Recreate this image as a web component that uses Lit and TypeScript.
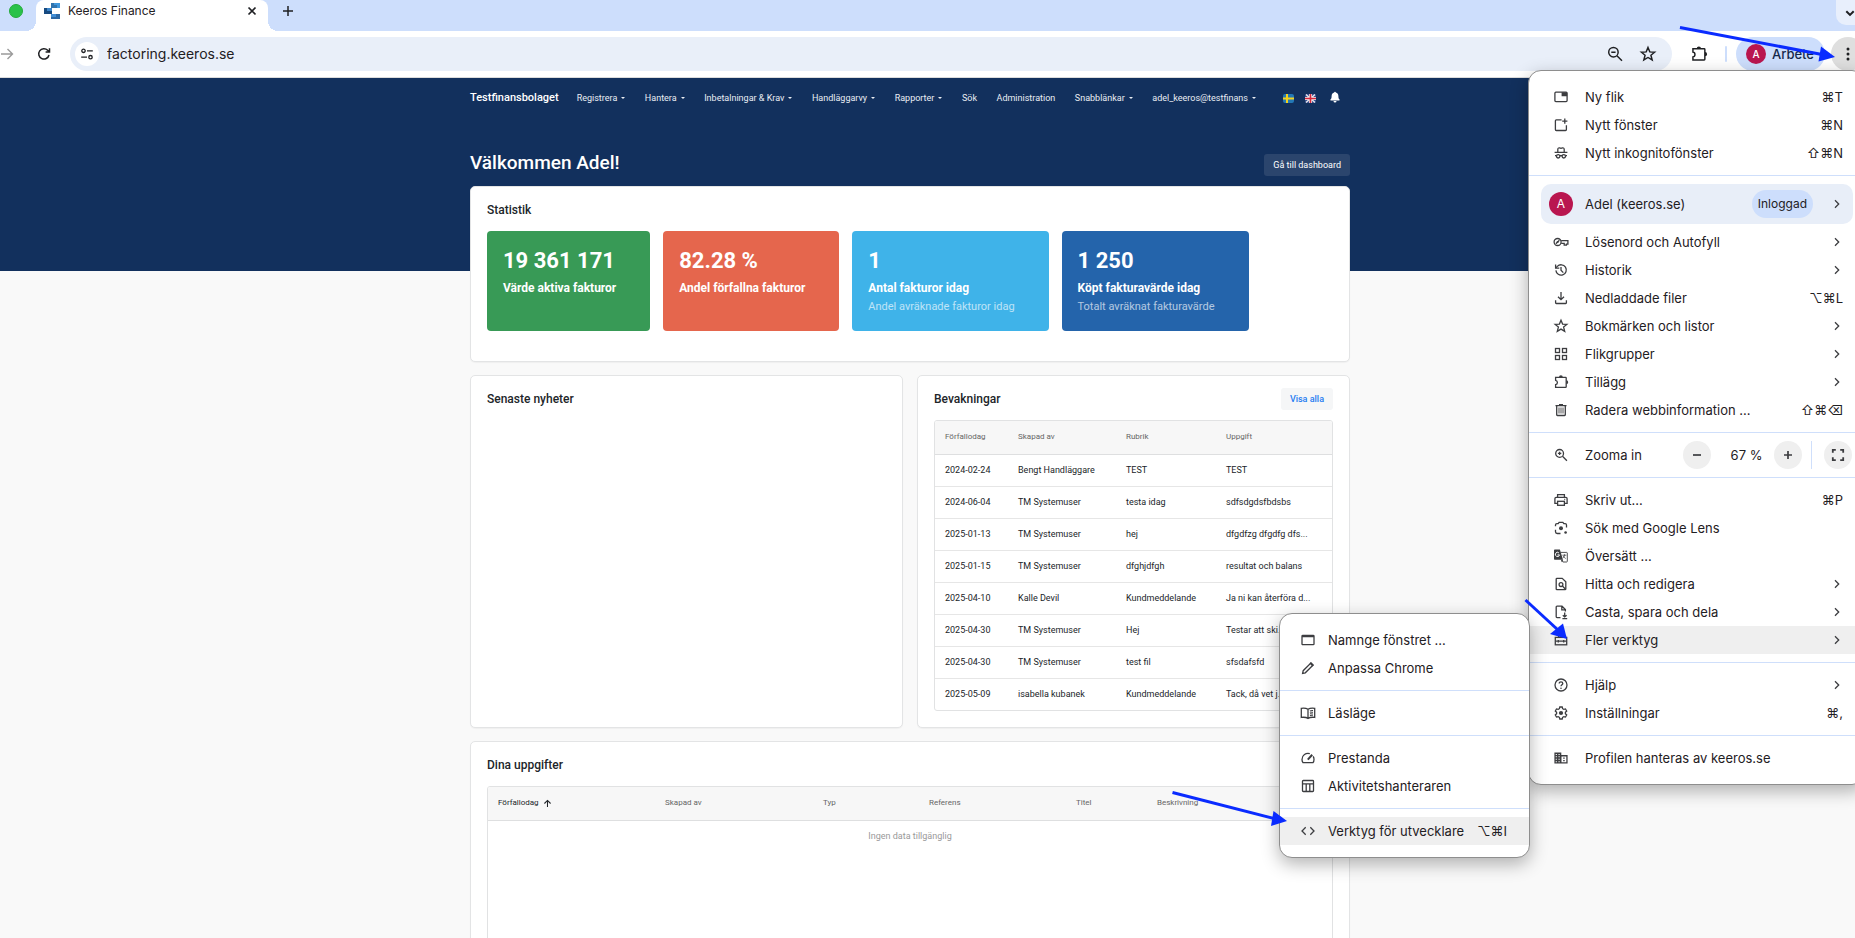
import { LitElement, html, svg, css, nothing, TemplateResult, SVGTemplateResult } from "lit";
import { customElement } from "lit/decorators.js";
import { classMap } from "lit/directives/class-map.js";

/* Stroke icons on a 16 x 16 grid; parts marked "f" are filled instead. */
const ICONS: Record<string, SVGTemplateResult> = {
  newTab: svg`<rect x="1.9" y="3.2" width="12.2" height="9.4" rx="1"/><path class="f" d="M8.6 3.2h5.5v4H8.6z"/>`,
  newWindow: svg`<path d="M8.6 2.9H3.3a.9.9 0 0 0-.9.9v8.8c0 .5.4.9.9.9h9.2c.5 0 .9-.4.9-.9V8.2"/><path d="M11.8 1.6v5.2M9.2 4.2h5.2"/>`,
  incognito: svg`<path d="M4.8 7.2V4.4c0-1.1.8-1.8 1.7-1.5l1.5.5 1.5-.5c.9-.3 1.7.4 1.7 1.5v2.8M1.600 7.400h12.800"/><circle cx="5.2" cy="11.3" r="1.7"/><circle cx="10.8" cy="11.3" r="1.7"/><path d="M6.9 11c.6-.5 1.6-.5 2.2 0M2 10.6h1.5M14 10.6h-1.5"/>`,
  key: svg`<circle cx="4.6" cy="8" r="3.5"/><circle class="f" cx="4.600" cy="8" r="1"/><path d="M2.800 9.800 6.400 6.200M8.200 6.600h6.700v3.600h-1.500v.9h-2.200V9.300H8.200"/>`,
  history: svg`<path d="M2.9 8.4A5.2 5.2 0 1 0 4.3 4.4L2.9 5.8"/><path d="M2.6 2.4v3.7h3.7M8 5.1v3.2l2.3 2.3"/>`,
  download: svg`<path d="M8 2v7.6M5 6.7l3 3 3-3M2.6 10.3v2.5c0 .4.3.7.7.7h9.4c.4 0 .7-.3.7-.7v-2.5"/>`,
  star: svg`<path d="m8 2.200 1.600 3.900 4.300.3-3.300 2.700 1.100 4.200L8 11.100l-3.700 2.200 1.100-4.200-3.300-2.700 4.300-.3z"/>`,
  grid: svg`<rect x="2.500" y="2.500" width="4" height="4"/><rect x="9.500" y="2.500" width="4" height="4"/><rect x="2.500" y="9.500" width="4" height="4"/><rect x="9.500" y="9.500" width="4" height="4"/>`,
  puzzle: svg`<path d="M2.600 3.300H12.600c.4 0 .6.2.6.6v8.800c0 .4-.2.6-.6.6H2.600v-2.700c1.100-.1 1.800-.9 1.800-2.100S3.700 6.500 2.600 6.300z"/><path class="f" d="M6 3.200a1.900 1.900 0 0 1 3.800 0zM13.300 6.300a1.900 1.900 0 0 1 0 3.800z"/>`,
  trash: svg`<path d="M3.700 3.900v8.900c0 .4.3.7.7.7h7.200c.4 0 .7-.3.7-.7V3.900M2.500 3.600h11M6 2.600h4"/><path d="M6 5.500v6M8 5.500v6M10 5.500v6" stroke-width=".9"/>`,
  zoomIn: svg`<circle cx="6.600" cy="6.400" r="3.900"/><path d="m9.500 9.300 4.400 4.400M6.600 4.700v3.400M4.900 6.400h3.400"/>`,
  zoomOut: svg`<circle cx="6.600" cy="6.400" r="4.200"/><path d="m9.700 9.500 4.500 4.500M4.700 6.400h3.800"/>`,
  printer: svg`<path d="M4.600 5.300V2.700h6.800v2.600M4.400 11.300H1.900V6.700c0-.8.5-1.300 1.300-1.300h9.600c.8 0 1.300.5 1.300 1.300v4.600h-2.500"/><rect x="4.600" y="9.300" width="6.800" height="4"/><path d="M11.300 7.300h.9"/>`,
  lens: svg`<path d="M2.500 6.300V5c0-.8.600-1.400 1.400-1.400h1.300l.9-1.200h3.800l.9 1.200h1.300c.8 0 1.400.6 1.400 1.400v2.500M2.500 9.700v2c0 1 .8 1.800 1.800 1.800h3.200"/><circle class="f" cx="8" cy="8.200" r="2"/><circle class="f" cx="12.600" cy="12.500" r="1.300"/>`,
  translate: svg`<path d="M7.500 4.400h6.200c.3 0 .6.300.6.600v8.400c0 .3-.3.600-.6.600H9.900l-.9-2" stroke-width=".9"/><path class="f" d="M2 1.600h4.900L10 11.700H2c-.6 0-1-.4-1-1V2.600c0-.6.4-1 1-1z"/><path class="wl" d="M5.900 4.900A2.100 2.100 0 1 0 6.500 6.900H4.500"/><path class="f" d="m8.700 14.200 1.500-2.500H8z"/><path d="M9.400 7.200h3.900M11.500 6.300v.9c0 1.100-.7 2.100-1.500 2.700M10.300 8.200c.4.900 1.300 1.700 2.400 2.300" stroke-width=".8"/>`,
  findPage: svg`<path d="M9.200 2.300H4c-.5 0-.8.3-.8.800v9.800c0 .5.3.8.800.8h8c.5 0 .8-.3.800-.8V5.800z"/><circle cx="8" cy="8.600" r="1.900"/><path d="m9.400 10 2.900 3"/>`,
  savePage: svg`<path d="M7.500 13.600H4c-.5 0-.8-.3-.8-.8V3c0-.5.3-.8.800-.8h5l3.400 3.400v1.800M8.800 2.400v3.400h3.400M11.700 8.600v4M9.800 11.200l1.900 1.700 1.900-1.700M9.400 14.600h4.800"/>`,
  toolbox: svg`<path d="M5.600 5.400V3.700h4.800v1.700"/><rect x="2.300" y="5.400" width="11.400" height="7.400"/><path d="M2.300 9.200h11.400M5.300 8v2.400M10.700 8v2.400"/>`,
  help: svg`<circle cx="8" cy="8" r="6"/><path d="M6.200 6.500c0-1 .8-1.700 1.800-1.700s1.800.7 1.800 1.600c0 1.200-1.800 1.400-1.800 2.900"/><circle class="f" cx="8" cy="11.200" r=".8"/>`,
  gear: svg`<path d="M6.800 2h2.400l.4 1.700 1.200.7 1.700-.5 1.200 2.100-1.300 1.200v1.600l1.300 1.200-1.200 2.100-1.700-.5-1.200.7-.4 1.700H6.800l-.4-1.700-1.200-.7-1.700.5L2.300 10l1.300-1.200V7.200L2.300 6l1.200-2.100 1.700.5 1.200-.7z"/><circle class="f" cx="8" cy="8" r="2.100"/>`,
  building: svg`<path class="f" d="M1.400 2.400h6.900v2.700h6.300v8.500H1.400z"/><path class="w" d="M2.700 3.900h1.200v1H2.700zM5.500 3.900h1.200v1H5.500zM2.700 6.300h1.200v1H2.700zM5.500 6.300h1.200v1H5.500zM2.700 8.800h1.200v1H2.700zM5.500 8.800h1.200v1H5.500zM2.700 11.200h1.200v1H2.700zM5.500 11.200h1.200v1H5.500zM8.500 6.400h4.800v5.900H8.500z"/><path class="f" d="M10.200 7.500h1.500v1.200h-1.500zM10.200 10h1.500v1.200h-1.500z"/>`,
  window: svg`<rect x="2" y="3.300" width="12" height="9.400" rx=".8"/><path class="f" d="M2 3h12v2.300H2z"/>`,
  pencil: svg`<path d="m2.600 13.400.6-2.700 7.600-7.600 2.100 2.100-7.600 7.600z"/><path class="f" d="m9.500 3.500 1.500-1.500 3 3-1.500 1.500z"/>`,
  reader: svg`<path d="M8 4.300C6.500 3.300 3.700 3 1.300 3.300v9.100c2.400-.3 5.200 0 6.700 1 1.500-1 4.300-1.300 6.700-1V3.300C12.300 3 9.500 3.300 8 4.300zM8 4.300v9M9.900 6c1-.3 2-.4 3.100-.3M9.900 8.200c1-.3 2-.4 3.100-.3M9.900 10.400c1-.3 2-.4 3.100-.3"/>`,
  gauge: svg`<path d="M9.800 3.700A6 6 0 0 0 2 9.400c0 1.200.4 2.400 1 3.300h10c.7-.9 1-2.100 1-3.300 0-1.100-.3-2.100-.8-3"/><path d="m7.800 9.600 4.400-4.800" stroke-width="2"/>`,
  panel: svg`<rect x="2.500" y="2.500" width="11" height="11" rx=".8"/><path d="M2.500 5.900h11M6.200 5.900v7.600M9.800 5.900v7.600"/>`,
  code: svg`<path d="M5.700 4.200 2 8l3.700 3.800M10.300 4.200 14 8l-3.700 3.800"/>`,
  chevron: svg`<path d="m6 4.300 3.700 3.700L6 11.700"/>`,
  chevronDown: svg`<path d="m4.300 6.200 3.700 3.700 3.700-3.700" stroke-width="2"/>`,
  minus: svg`<path d="M4 8h8" stroke-width="1.700"/>`,
  plus: svg`<path d="M4 8h8M8 4v8" stroke-width="1.700"/>`,
  newTabPlus: svg`<path d="M3 8h10M8 3v10" stroke-width="1.500"/>`,
  close: svg`<path d="m4.500 4.500 7 7m0-7-7 7" stroke-width="1.700"/>`,
  fullscreen: svg`<path d="M2.800 5.800V2.800h3M10.200 2.800h3v3M13.200 10.200v3h-3M5.800 13.200h-3v-3" stroke-width="1.800"/>`,
  forward: svg`<path d="M2 8h11.500M8.500 3l5 5-5 5" stroke-width="1.400"/>`,
  reload: svg`<path d="M13 9a5.200 5.200 0 1 1-1.300-4.700l1.500 1.500M13.500 2.200v3.900H9.600" stroke-width="1.500"/>`,
  tune: svg`<circle cx="4.500" cy="4.800" r="1.700"/><path d="M8 4.800h5.800M2.200 11.200H8"/><circle cx="11.500" cy="11.200" r="1.700"/>`,
  dots: svg`<circle class="f" cx="8" cy="3" r="1.500"/><circle class="f" cx="8" cy="8" r="1.500"/><circle class="f" cx="8" cy="13" r="1.500"/>`,
  sortUp: svg`<path d="M8 14V2.500M2.500 8 8 2.500 13.500 8" stroke-width="1.900"/>`,
  bell: svg`<path class="f" d="M8 1c.7 0 1.100.5 1.100 1.100C11.300 2.600 12.500 4.300 12.500 6.500c0 3 .8 4 1.700 4.900.3.400 0 1.100-.5 1.100H2.300c-.5 0-.8-.7-.5-1.100.9-.9 1.700-1.900 1.700-4.900 0-2.200 1.200-3.900 3.400-4.400C6.900 1.500 7.300 1 8 1zM6 13.300h4a2 2 0 0 1-4 0z"/>`,
};

const icon = (name: string, extra = "") =>
  html`<svg class="icon ${extra}" viewBox="0 0 16 16" aria-hidden="true">${ICONS[name]}</svg>`;

const iconStyles = css`
  .icon {
    width: 16px;
    height: 16px;
    flex: none;
    display: block;
    fill: none;
    stroke: currentColor;
    stroke-width: 1.3;
  }
  .icon .f { fill: currentColor; stroke: none; }
  .icon .w { fill: #fff; stroke: none; }
  .icon .wl { fill: none; stroke: #fff; stroke-width: 1; }
  button { font: inherit; color: inherit; border: 0; background: none; padding: 0; margin: 0; }
`;

interface MenuItem {
  icon: string;
  label: string;
  keys?: string;
  sub?: boolean;
  active?: boolean;
}

const GENERAL: MenuItem[] = [
  { icon: "newTab", label: "Ny flik", keys: "⌘T" },
  { icon: "newWindow", label: "Nytt fönster", keys: "⌘N" },
  { icon: "incognito", label: "Nytt inkognitofönster", keys: "⇧⌘N" },
];
const DATA: MenuItem[] = [
  { icon: "key", label: "Lösenord och Autofyll", sub: true },
  { icon: "history", label: "Historik", sub: true },
  { icon: "download", label: "Nedladdade filer", keys: "⌥⌘L" },
  { icon: "star", label: "Bokmärken och listor", sub: true },
  { icon: "grid", label: "Flikgrupper", sub: true },
  { icon: "puzzle", label: "Tillägg", sub: true },
  { icon: "trash", label: "Radera webbinformation ...", keys: "⇧⌘⌫" },
];
const TOOLS: MenuItem[] = [
  { icon: "printer", label: "Skriv ut...", keys: "⌘P" },
  { icon: "lens", label: "Sök med Google Lens" },
  { icon: "translate", label: "Översätt ..." },
  { icon: "findPage", label: "Hitta och redigera", sub: true },
  { icon: "savePage", label: "Casta, spara och dela", sub: true },
  { icon: "toolbox", label: "Fler verktyg", sub: true, active: true },
];
const SETTINGS: MenuItem[] = [
  { icon: "help", label: "Hjälp", sub: true },
  { icon: "gear", label: "Inställningar", keys: "⌘," },
];
const MANAGED: MenuItem[] = [{ icon: "building", label: "Profilen hanteras av keeros.se" }];
const MORE_TOOLS: MenuItem[][] = [
  [
    { icon: "window", label: "Namnge fönstret ..." },
    { icon: "pencil", label: "Anpassa Chrome" },
  ],
  [{ icon: "reader", label: "Läsläge" }],
  [
    { icon: "gauge", label: "Prestanda" },
    { icon: "panel", label: "Aktivitetshanteraren" },
  ],
  [{ icon: "code", label: "Verktyg för utvecklare", keys: "⌥⌘I", active: true }],
];

const menuStyles = css`
  :host {
    display: block;
    box-sizing: border-box;
    padding: 12px 0;
    background: #fff;
    border: 1px solid #8e8e8e;
    border-radius: 13px;
    box-shadow: 0 6px 18px rgba(0, 0, 0, 0.3);
    font: 13px/28px Inter, "Liberation Sans", sans-serif;
    color: #1f2023;
    overflow: hidden;
  }
  .item {
    display: flex;
    align-items: center;
    width: 100%;
    height: 28px;
    padding: 0 21px 0 24px;
    gap: 16px;
    text-align: left;
    white-space: nowrap;
  }
  .item.active { background: #efefef; }
  .icon { color: #3c3d40; }
  .label { flex: 1; }
  .chevron { margin-right: -2px; }
  hr { border: 0; height: 1px; background: #cfdffb; margin: 8px 0; }
`;

const menuItem = (i: MenuItem) => html`
  <button class=${classMap({ item: true, active: !!i.active })} role="menuitem">
    ${icon(i.icon)}<span class="label">${i.label}</span>
    ${i.keys ? html`<span>${i.keys}</span>` : nothing}
    ${i.sub ? icon("chevron", "chevron") : nothing}
  </button>
`;

@customElement("browser-menu")
class BrowserMenu extends LitElement {
  static styles = [
    iconStyles,
    menuStyles,
    css`
      .profile {
        display: flex;
        align-items: center;
        gap: 12px;
        width: calc(100% - 23px);
        height: 40px;
        margin: 0 11px 4px 12px;
        padding: 0 8px;
        border-radius: 10px;
        background: #e8eef8;
        text-align: left;
      }
      .profile .chevron { margin-right: 0; }
      .avatar {
        width: 24px;
        border-radius: 50%;
        background: #b9164f;
        color: #fff;
        font-size: 12px;
        line-height: 24px;
        text-align: center;
      }
      .badge {
        padding: 0 6px;
        margin-right: 4px;
        border-radius: 14px;
        background: #cddefc;
        font-size: 12px;
      }
      .zoom { display: flex; align-items: center; height: 28px; padding: 0 12px 0 24px; }
      .zoom .label { padding-left: 16px; }
      .round {
        display: grid;
        place-items: center;
        width: 28px;
        height: 28px;
        border-radius: 50%;
        background: #efefef;
      }
      .value { width: 63px; text-align: center; padding-left: 8px; box-sizing: border-box; }
      .bar { width: 1px; height: 28px; margin: 0 12px 0 9px; background: #cfdffb; }
    `,
  ];

  render() {
    return html`
      ${GENERAL.map(menuItem)}
      <hr />
      <button class="profile" role="menuitem">
        <span class="avatar">A</span><span class="label">Adel (keeros.se)</span>
        <span class="badge">Inloggad</span>${icon("chevron", "chevron")}
      </button>
      ${DATA.map(menuItem)}
      <hr />
      <div class="zoom">
        ${icon("zoomIn")}<span class="label">Zooma in</span>
        <button class="round" aria-label="Zooma ut">${icon("minus")}</button>
        <span class="value">67 %</span>
        <button class="round" aria-label="Zooma in">${icon("plus")}</button>
        <span class="bar"></span>
        <button class="round" aria-label="Helskärm">${icon("fullscreen")}</button>
      </div>
      <hr />
      ${TOOLS.map(menuItem)}
      <hr />
      ${SETTINGS.map(menuItem)}
      <hr />
      ${MANAGED.map(menuItem)}
    `;
  }
}

@customElement("tools-submenu")
class ToolsSubmenu extends LitElement {
  static styles = [
    iconStyles,
    menuStyles,
    css`
      .item { padding: 0 22px 0 20px; gap: 12px; }
    `,
  ];

  render() {
    return MORE_TOOLS.map((group, n) => html`${n ? html`<hr />` : nothing}${group.map(menuItem)}`);
  }
}

@customElement("browser-chrome")
class BrowserChrome extends LitElement {
  static styles = [
    iconStyles,
    css`
      :host { display: block; font: 12px/16px Inter, "Liberation Sans", sans-serif; color: #1f2023; }
      .tabs { display: flex; height: 31px; padding-left: 54px; background: #cddefc; }
      .light {
        width: 12px;
        height: 12px;
        box-sizing: content-box;
        margin-top: 4px;
        border: 1px solid #24ab3c;
        border-radius: 50%;
        background: #2ac24a;
      }
      .tab {
        position: relative;
        display: flex;
        align-items: center;
        gap: 8px;
        width: 232px;
        height: 31px;
        box-sizing: border-box;
        margin-left: 13px;
        padding: 0 8px 9px;
        border-radius: 8px 8px 0 0;
        background: #fff;
      }
      .tab::before,
      .tab::after {
        content: "";
        position: absolute;
        bottom: 0;
        width: 10px;
        height: 10px;
      }
      .tab::before { right: 100%; background: radial-gradient(circle at 0 0, #cddefc 10px, #fff 10px); }
      .tab::after { left: 100%; background: radial-gradient(circle at 100% 0, #cddefc 10px, #fff 10px); }
      .tab-title { flex: 1; }
      .favicon { width: 16px; height: 16px; display: block; }
      .new-tab { display: flex; align-items: center; height: 22px; margin-left: 12px; }
      .search-tabs {
        width: 29px;
        height: 25px;
        margin-left: auto;
        padding-left: 6px;
        border-radius: 0 0 0 10px;
        background: #e8effc;
      }
      .bar {
        display: flex;
        align-items: center;
        height: 46px;
        padding-left: 44px;
        border-bottom: 1px solid #dcdcdc;
        background: #fff;
      }
      .forward { color: #9b9b9b; }
      .reload { margin: 0 18px 0 21px; }
      .address {
        display: flex;
        align-items: center;
        flex: 1;
        height: 34px;
        padding: 0 15px 0 5px;
        border-radius: 17px;
        background: #e9eff9;
      }
      .site {
        display: grid;
        place-items: center;
        width: 24px;
        height: 24px;
        border-radius: 50%;
        background: #fff;
      }
      input {
        flex: 1;
        min-width: 0;
        padding: 0 0 0 8px;
        border: 0;
        outline: 0;
        background: none;
        font: 14px/20px Inter, "Liberation Sans", sans-serif;
        color: #1f2023;
      }
      .star { margin-left: 15px; }
      .extensions { margin: 0 17px 0 18px; }
      .sep { width: 2px; height: 16px; border-radius: 1px; background: #cddefc; }
      .account {
        display: flex;
        align-items: center;
        gap: 6px;
        height: 34px;
        margin: 0 6px 0 9px;
        padding: 0 11px 0 10px;
        border-radius: 17px;
        background: #cddefc;
        color: #14284b;
        font-size: 13px;
        font-weight: 500;
      }
      .avatar {
        width: 20px;
        border-radius: 50%;
        background: #b9164f;
        color: #fff;
        font-size: 10px;
        line-height: 20px;
        text-align: center;
      }
      .more {
        display: grid;
        place-items: center;
        width: 34px;
        height: 34px;
        border-radius: 50%;
        background: #dfdfdf;
      }
      .big { width: 18px; height: 18px; }
    `,
  ];

  render() {
    return html`
      <div class="tabs">
        <span class="light"></span>
        <div class="tab">
          <svg class="favicon" viewBox="0 0 16 16" aria-hidden="true">
            <path fill="#2f73ae" d="M7 0h9v5H7z" />
            <path fill="#3f97dd" d="M10 0h6v5h-3V2h-3z" />
            <path fill="#174a80" d="M0 5h8v6H0z" />
            <path fill="#3b86cb" d="M3 5h5v3H3z" />
            <path fill="#2b68a5" d="M7 11h9v5H7z" />
            <path fill="#418ed6" d="M7 11h5v3H7z" />
          </svg>
          <span class="tab-title">Keeros Finance</span>
          <button aria-label="Stäng flik">${icon("close")}</button>
        </div>
        <button class="new-tab" aria-label="Ny flik">${icon("newTabPlus")}</button>
        <button class="search-tabs" aria-label="Sök bland flikar">${icon("chevronDown")}</button>
      </div>
      <div class="bar">
        <button class="forward" aria-label="Framåt">${icon("forward")}</button>
        <button class="reload" aria-label="Läs in igen">${icon("reload")}</button>
        <div class="address">
          <button class="site" aria-label="Webbplatsinformation">${icon("tune")}</button>
          <input aria-label="Adress" value="factoring.keeros.se" />
          <button aria-label="Zoom">${icon("zoomOut", "big")}</button>
          <button class="star" aria-label="Bokmärk">${icon("star", "big")}</button>
        </div>
        <button class="extensions" aria-label="Tillägg">${icon("puzzle", "big")}</button>
        <span class="sep"></span>
        <button class="account"><span class="avatar">A</span>Arbete</button>
        <button class="more" aria-label="Meny">${icon("dots")}</button>
      </div>
    `;
  }
}

const NAV: { label: string; menu: boolean }[] = [
  { label: "Registrera", menu: true },
  { label: "Hantera", menu: true },
  { label: "Inbetalningar & Krav", menu: true },
  { label: "Handläggarvy", menu: true },
  { label: "Rapporter", menu: true },
  { label: "Sök", menu: false },
  { label: "Administration", menu: false },
  { label: "Snabblänkar", menu: true },
  { label: "adel_keeros@testfinans", menu: true },
];
const STATS = [
  { value: "19 361 171", label: "Värde aktiva fakturor", tone: "green" },
  { value: "82.28 %", label: "Andel förfallna fakturor", tone: "red" },
  { value: "1", label: "Antal fakturor idag", note: "Andel avräknade fakturor idag", tone: "sky" },
  { value: "1 250", label: "Köpt fakturavärde idag", note: "Totalt avräknat fakturavärde", tone: "blue" },
];
const WATCHES = [
  ["2024-02-24", "Bengt Handläggare", "TEST", "TEST"],
  ["2024-06-04", "TM Systemuser", "testa idag", "sdfsdgdsfbdsbs"],
  ["2025-01-13", "TM Systemuser", "hej", "dfgdfzg dfgdfg dfs..."],
  ["2025-01-15", "TM Systemuser", "dfghjdfgh", "resultat och balans"],
  ["2025-04-10", "Kalle Devil", "Kundmeddelande", "Ja ni kan återföra d..."],
  ["2025-04-30", "TM Systemuser", "Hej", "Testar att ski..."],
  ["2025-04-30", "TM Systemuser", "test fil", "sfsdafsfd"],
  ["2025-05-09", "isabella kubanek", "Kundmeddelande", "Tack, då vet j..."],
];

@customElement("finance-page")
class FinancePage extends LitElement {
  static styles = [
    iconStyles,
    css`
      :host {
        display: block;
        background: linear-gradient(#12305d 193px, #f9f9f9 193px);
        font: 9px/12px Roboto, "Liberation Sans", sans-serif;
        color: #212529;
      }
      * { box-sizing: border-box; }
      .container { max-width: 880px; margin: 0 auto; }
      nav { display: flex; align-items: center; height: 40px; color: #e9edf3; }
      nav a { color: inherit; text-decoration: none; white-space: nowrap; }
      nav .brand { color: #fff; font-size: 11px; font-weight: 500; margin-right: 18px; }
      .links { display: flex; flex: 1; justify-content: space-between; margin-right: 27px; }
      .menu::after {
        content: "";
        display: inline-block;
        margin-left: 4px;
        vertical-align: 2px;
        border: 2px solid transparent;
        border-top-color: currentColor;
        border-bottom: 0;
      }
      .flag { display: block; width: 11px; height: 11px; margin-right: 11px; }
      .flag svg { display: block; width: 11px; height: 11px; }
      .bell { width: 12px; height: 12px; margin: 0 9px 2px 2px; color: #fff; }
      .title { display: flex; justify-content: space-between; height: 25px; margin: 33px 0 10px; }
      h1 { margin: 0; font-size: 19px; line-height: 24px; font-weight: 500; color: #fff; }
      h2 { margin: 0; font-size: 12px; line-height: 22px; font-weight: 500; }
      .button { height: 22px; padding: 0 9px; border-radius: 3px; font-size: 9px; }
      .title .button { align-self: flex-end; background: #2b456d; color: #fff; }
      .light { background: #f5f6f7; color: #1f7cf2; font-weight: 500; }
      .card {
        padding: 12px 16px 16px;
        border: 1px solid #e3e4e5;
        border-radius: 5px;
        background: #fff;
        box-shadow: 0 1px 1px rgba(0, 0, 0, 0.04);
      }
      .head { display: flex; justify-content: space-between; margin-bottom: 10px; }
      .stack { display: grid; gap: 13px; }
      .pair { display: grid; grid-template-columns: 1fr 1fr; gap: 14px; }
      .summary { padding-bottom: 30px; }
      .stats { display: flex; gap: 13px; }
      .stat { height: 100px; padding: 17px 34px 0 16px; border-radius: 4px; color: #fff; }
      .green { background: #389a56; }
      .red { background: #e5664d; }
      .sky { background: #3fb3e9; }
      .blue { background: #2464ab; }
      .value { font-size: 22px; line-height: 26px; font-weight: 700; }
      .name { margin-top: 5px; font-size: 12px; line-height: 18px; font-weight: 700; }
      .note { font-size: 11px; line-height: 20px; opacity: 0.65; }
      .frame { border: 1px solid #e1e2e3; border-radius: 3px; overflow: hidden; }
      .tasks { min-height: 300px; }
      table { width: 100%; border-collapse: collapse; table-layout: fixed; }
      th {
        height: 33px;
        padding: 0 10px;
        border-bottom: 1px solid #dedfe0;
        background: #f7f7f7;
        color: #666;
        font-size: 8px;
        font-weight: 400;
        text-align: left;
      }
      td { height: 32px; padding: 0 10px; border-bottom: 1px solid #e6e6e6; white-space: nowrap; }
      tr:last-child td { border-bottom: 0; }
      th.sorted { color: #212529; }
      .sorted span { display: flex; align-items: center; gap: 4px; }
      .sorted .icon { width: 9px; height: 9px; }
      td.empty { text-align: center; color: #999; font-size: 9px; }
      .w1 { width: 73px; }
      .w2 { width: 108px; }
      .w3 { width: 100px; }
      .t1 { width: 167px; }
      .t2 { width: 158px; }
      .t3 { width: 106px; }
      .t4 { width: 147px; }
      .t5 { width: 81px; }
    `,
  ];

  render() {
    return html`
      <div class="container">
        <nav>
          <a class="brand" href="#">Testfinansbolaget</a>
          <div class="links">
            ${NAV.map((n) => html`<a class=${classMap({ menu: n.menu })} href="#">${n.label}</a>`)}
          </div>
          <a class="flag" href="#" aria-label="Svenska">
            <svg viewBox="0 0 11 11">
              <rect y="1" width="11" height="9" rx="2" fill="#2478b5" />
              <path fill="#f5d21c" d="M3 1h2v9H3zM0 4.500h11v2H0z" />
            </svg>
          </a>
          <a class="flag" href="#" aria-label="English">
            <svg viewBox="0 0 11 11">
              <rect y="1" width="11" height="9" rx="2" fill="#37508f" />
              <path stroke="#e9e9ee" stroke-width="1.500" d="m1 1.500 9 8M10 1.500l-9 8" />
              <path fill="#f0eef0" d="M4 1h3v9H4zM0 4h11v3H0z" />
              <path fill="#d4273b" d="M4.700 1h1.600v9H4.700zM0 4.700h11v1.600H0z" />
            </svg>
          </a>
          <button aria-label="Aviseringar">${icon("bell", "bell")}</button>
        </nav>
        <div class="title">
          <h1>Välkommen Adel!</h1>
          <button class="button">Gå till dashboard</button>
        </div>
        <div class="stack">
          <section class="card summary">
            <div class="head"><h2>Statistik</h2></div>
            <div class="stats">
              ${STATS.map(
                (s) => html`
                  <div class="stat ${s.tone}">
                    <div class="value">${s.value}</div>
                    <div class="name">${s.label}</div>
                    ${s.note ? html`<div class="note">${s.note}</div>` : nothing}
                  </div>
                `
              )}
            </div>
          </section>
          <div class="pair">
            <section class="card">
              <div class="head"><h2>Senaste nyheter</h2></div>
            </section>
            <section class="card">
              <div class="head">
                <h2>Bevakningar</h2>
                <button class="button light">Visa alla</button>
              </div>
              <div class="frame">
                <table>
                  <thead>
                    <tr>
                      <th class="w1">Förfallodag</th>
                      <th class="w2">Skapad av</th>
                      <th class="w3">Rubrik</th>
                      <th>Uppgift</th>
                    </tr>
                  </thead>
                  <tbody>
                    ${WATCHES.map((r) => html`<tr>${r.map((c) => html`<td>${c}</td>`)}</tr>`)}
                  </tbody>
                </table>
              </div>
            </section>
          </div>
          <section class="card">
            <div class="head"><h2>Dina uppgifter</h2></div>
            <div class="frame tasks">
              <table>
                <thead>
                  <tr>
                    <th class="t1 sorted"><span>Förfallodag ${icon("sortUp")}</span></th>
                    <th class="t2">Skapad av</th>
                    <th class="t3">Typ</th>
                    <th class="t4">Referens</th>
                    <th class="t5">Titel</th>
                    <th>Beskrivning</th>
                  </tr>
                </thead>
                <tbody>
                  <tr><td class="empty" colspan="6">Ingen data tillgänglig</td></tr>
                </tbody>
              </table>
            </div>
          </section>
        </div>
      </div>
    `;
  }
}

@customElement("app-root")
class AppRoot extends LitElement {
  static styles = css`
    :host { display: block; position: relative; height: 100vh; overflow: hidden; background: #f9f9f9; }
    /* The browser window reaches past both sides of the view. */
    .window { position: relative; margin: 0 -10px 0 -45px; }
    .menu { position: absolute; top: 70px; right: 0; width: 337px; }
    .submenu { position: absolute; top: 613px; right: 335px; width: 251px; }
    .arrows { position: absolute; top: 0; right: 0; width: 700px; height: 938px; pointer-events: none; }
    .arrows path { fill: #0a2bff; stroke: #0a2bff; }
    .arrows .shaft { stroke-width: 3; }
    .arrows .tip { stroke: none; }
  `;

  render(): TemplateResult {
    return html`
      <div class="window">
        <browser-chrome></browser-chrome>
        <finance-page></finance-page>
        <browser-menu class="menu" role="menu"></browser-menu>
        <tools-submenu class="submenu" role="menu"></tools-submenu>
      </div>
      <svg class="arrows" viewBox="1155 0 700 938" aria-hidden="true">
        <path class="shaft" d="M1680 27.500 1822 54.500" />
        <path class="tip" d="M1835 57 1821 46.500 1818.500 61.500z" />
        <path class="shaft" d="M1525.500 600 1558 630" />
        <path class="tip" d="M1567 639 1563 623.500 1550 634z" />
        <path class="shaft" d="M1172.500 792.500 1274 818.500" />
        <path class="tip" d="M1287 821 1273.500 811 1271 826z" />
      </svg>
    `;
  }
}
